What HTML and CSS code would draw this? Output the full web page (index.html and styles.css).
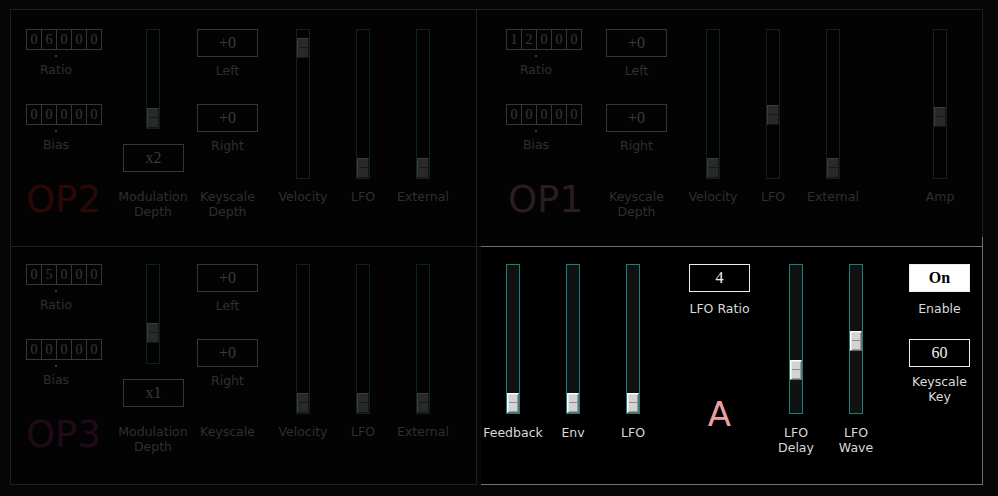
FILE: index.html
```html
<!DOCTYPE html>
<html>
<head>
<meta charset="utf-8">
<title>FM Operators</title>
<link rel="stylesheet" href="styles.css">
</head>
<body>
<div class="rack">
  <section class="panel op op2">
    <div class="col c-digits">
      <div class="digits"><span>0</span><span>6</span><span>0</span><span>0</span><span>0</span></div>
      <div class="dot"></div>
      <div class="lbl">Ratio</div>
      <div class="digits bias"><span>0</span><span>0</span><span>0</span><span>0</span><span>0</span></div>
      <div class="dot"></div>
      <div class="lbl">Bias</div>
      <div class="oplabel">OP2</div>
    </div>
    <div class="col c-mod">
      <div class="track short"><div class="thumb" style="--off:78px"></div></div>
      <div class="box">x2</div>
      <div class="lbl">Modulation<br>Depth</div>
    </div>
    <div class="col c-key">
      <div class="box">+0</div>
      <div class="lbl">Left</div>
      <div class="box right">+0</div>
      <div class="lbl">Right</div>
      <div class="lbl foot">Keyscale<br>Depth</div>
    </div>
    <div class="col c-slider c-first">
      <div class="track"><div class="thumb" style="--off:8px"></div></div>
      <div class="lbl">Velocity</div>
    </div>
    <div class="col c-slider">
      <div class="track"><div class="thumb" style="--off:128px"></div></div>
      <div class="lbl">LFO</div>
    </div>
    <div class="col c-slider">
      <div class="track"><div class="thumb" style="--off:128px"></div></div>
      <div class="lbl">External</div>
    </div>
  </section>

  <section class="panel op op1">
    <div class="col c-digits">
      <div class="digits"><span>1</span><span>2</span><span>0</span><span>0</span><span>0</span></div>
      <div class="dot"></div>
      <div class="lbl">Ratio</div>
      <div class="digits bias"><span>0</span><span>0</span><span>0</span><span>0</span><span>0</span></div>
      <div class="dot"></div>
      <div class="lbl">Bias</div>
      <div class="oplabel">OP1</div>
    </div>
    <div class="col c-key">
      <div class="box">+0</div>
      <div class="lbl">Left</div>
      <div class="box right">+0</div>
      <div class="lbl">Right</div>
      <div class="lbl foot">Keyscale<br>Depth</div>
    </div>
    <div class="col c-slider c-first">
      <div class="track"><div class="thumb" style="--off:128px"></div></div>
      <div class="lbl">Velocity</div>
    </div>
    <div class="col c-slider">
      <div class="track"><div class="thumb" style="--off:75px"></div></div>
      <div class="lbl">LFO</div>
    </div>
    <div class="col c-slider">
      <div class="track"><div class="thumb" style="--off:128px"></div></div>
      <div class="lbl">External</div>
    </div>
    <div class="col c-slider c-amp">
      <div class="track"><div class="thumb" style="--off:77px"></div></div>
      <div class="lbl">Amp</div>
    </div>
  </section>

  <section class="panel op op3">
    <div class="col c-digits">
      <div class="digits"><span>0</span><span>5</span><span>0</span><span>0</span><span>0</span></div>
      <div class="dot"></div>
      <div class="lbl">Ratio</div>
      <div class="digits bias"><span>0</span><span>0</span><span>0</span><span>0</span><span>0</span></div>
      <div class="dot"></div>
      <div class="lbl">Bias</div>
      <div class="oplabel">OP3</div>
    </div>
    <div class="col c-mod">
      <div class="track short"><div class="thumb" style="--off:58px"></div></div>
      <div class="box">x1</div>
      <div class="lbl">Modulation<br>Depth</div>
    </div>
    <div class="col c-key">
      <div class="box">+0</div>
      <div class="lbl">Left</div>
      <div class="box right">+0</div>
      <div class="lbl">Right</div>
      <div class="lbl foot">Keyscale</div>
    </div>
    <div class="col c-slider c-first">
      <div class="track"><div class="thumb" style="--off:128px"></div></div>
      <div class="lbl">Velocity</div>
    </div>
    <div class="col c-slider">
      <div class="track"><div class="thumb" style="--off:128px"></div></div>
      <div class="lbl">LFO</div>
    </div>
    <div class="col c-slider">
      <div class="track"><div class="thumb" style="--off:128px"></div></div>
      <div class="lbl">External</div>
    </div>
  </section>

  <section class="panel apanel">
    <div class="col c-slider">
      <div class="track"><div class="thumb" style="--off:128px"></div></div>
      <div class="lbl">Feedback</div>
    </div>
    <div class="col c-slider">
      <div class="track"><div class="thumb" style="--off:128px"></div></div>
      <div class="lbl">Env</div>
    </div>
    <div class="col c-slider">
      <div class="track"><div class="thumb" style="--off:128px"></div></div>
      <div class="lbl">LFO</div>
    </div>
    <div class="col c-ratio">
      <div class="box">4</div>
      <div class="lbl">LFO Ratio</div>
      <div class="big-a">A</div>
    </div>
    <div class="col c-slider c-delay">
      <div class="track"><div class="thumb" style="--off:95px"></div></div>
      <div class="lbl">LFO<br>Delay</div>
    </div>
    <div class="col c-slider">
      <div class="track"><div class="thumb" style="--off:66px"></div></div>
      <div class="lbl">LFO<br>Wave</div>
    </div>
    <div class="col c-enable">
      <div class="box on">On</div>
      <div class="lbl">Enable</div>
      <div class="box key">60</div>
      <div class="lbl foot">Keyscale<br>Key</div>
    </div>
  </section>
</div>
</body>
</html>
```

FILE: styles.css
```css
* {
  box-sizing: border-box;
  margin: 0;
  padding: 0;
}

html, body {
  background: #060606;
}

body {
  width: 998px;
  height: 496px;
  overflow: hidden;
  font-family: "DejaVu Sans", sans-serif;
  font-size: 12.5px;
  line-height: 15px;
}

.rack {
  display: grid;
  grid-template-columns: 467px 506px;
  grid-template-rows: 238px 238px;
  margin: 9px 0 0 10px;
}

.panel {
  display: flex;
  align-items: flex-start;
  background: #030303;
}

.op2 {
  border: 1px solid #1f1f1f;
  padding: 19px 0 0 15px;
}

.op1 {
  border: 1px solid #1f1f1f;
  border-left: 0;
  padding: 19px 0 0 29px;
}

.op3 {
  border: 1px solid #1f1f1f;
  border-top: 0;
  padding: 17px 0 0 15px;
}

.apanel {
  position: relative;
  height: 239px;
  margin: -1px 0 0 4px;
  border: 1px solid #727272;
  border-left: 0;
  background: #000;
  padding: 17px 0 0 2px;
}

.apanel::before {
  content: "";
  position: absolute;
  right: -1px;
  top: -10px;
  width: 1px;
  height: 9px;
  background: #727272;
}

/* columns */
.col {
  flex: none;
  width: 60px;
  display: flex;
  flex-direction: column;
  align-items: center;
}

.c-key, .c-ratio, .c-enable {
  width: 61px;
}

.op2 .c-mod, .op3 .c-mod { margin-left: 37px; }
.op2 .c-key, .op3 .c-key { margin-left: 14px; }
.op2 .c-first, .op3 .c-first { margin-left: 15px; }
.op1 .c-key { margin-left: 40px; }
.op1 .c-first { margin-left: 16px; }
.op1 .c-amp { margin-left: 47px; }
.apanel .c-ratio { margin-left: 26px; }
.apanel .c-delay { margin-left: 16px; }
.apanel .c-enable { margin-left: 23px; }

/* labels */
.lbl {
  white-space: nowrap;
  text-align: center;
  color: #2f2f2f;
}

.apanel .lbl {
  color: #d9d9d9;
}

/* digit entry */
.digits {
  display: flex;
  align-self: flex-start;
  height: 21px;
  border: 1px solid #363636;
}

.digits span {
  width: 14px;
  height: 19px;
  font: 14px/19px "Liberation Serif", serif;
  color: #393939;
  text-align: center;
}

.digits span + span {
  width: 15px;
  border-left: 1px solid #363636;
}

.dot {
  width: 2px;
  height: 2px;
  margin-top: 5px;
  background: #383838;
}

.c-digits .lbl { margin-top: 5px; }
.c-digits .digits.bias { margin-top: 27px; }

.oplabel {
  align-self: flex-start;
  margin-top: 29px;
  font-size: 37px;
  line-height: 37px;
  white-space: nowrap;
}

.op2 .oplabel { color: #2c0707; }
.op1 .oplabel { color: #2a1d1d; margin-left: 2px; }
.op3 .oplabel { color: #200a18; }

/* value boxes */
.box {
  width: 61px;
  height: 28px;
  border: 1px solid #363636;
  font: 16px/26px "Liberation Serif", serif;
  text-align: center;
  color: #3b3b3b;
}

.apanel .box {
  border-color: #ececec;
  color: #f0f0f0;
}

.apanel .box.on {
  background: #fff;
  color: #000;
  font-weight: bold;
}

.c-mod .box { margin-top: 15px; align-self: flex-start; }
.c-mod .lbl { margin-top: 17px; }

.c-key .lbl { margin-top: 6px; }
.c-key .box.right { margin-top: 26px; }
.c-key .lbl.foot { margin-top: 36px; }

.c-slider .lbl { margin-top: 10px; }
.apanel .c-slider .lbl { margin-top: 11px; }

.c-ratio .lbl { margin-top: 9px; }
.big-a {
  margin-top: 81px;
  font-size: 34px;
  line-height: 34px;
  color: #e6a1a0;
}

.c-enable .lbl { margin-top: 9px; }
.c-enable .box.key { margin-top: 23px; }
.c-enable .lbl.foot { margin-top: 7px; }

/* sliders */
.track {
  position: relative;
  width: 14px;
  height: 150px;
  border: 1px solid #0c2321;
  background: #020202;
}

.track.short {
  height: 100px;
}

.thumb {
  position: absolute;
  left: 0;
  top: var(--off);
  width: 12px;
  height: 20px;
  background: #292929;
  border: 1px solid;
  border-color: #3b3b3b #151515 #151515 #3b3b3b;
}

.thumb::after {
  content: "";
  position: absolute;
  left: 1px;
  right: 0;
  top: 8px;
  height: 1px;
  background: #171717;
}

.apanel .track {
  border-color: #17807a;
  background: #111;
}

.apanel .thumb {
  background: #d3d3d3;
  border-color: #fff #6c6c6c #6c6c6c #fff;
  box-shadow: inset 1px 1px 0 #e6e6e6, inset -1px -1px 0 #9a9a9a;
}

.apanel .thumb::after {
  background: #8c8c8c;
}
```
